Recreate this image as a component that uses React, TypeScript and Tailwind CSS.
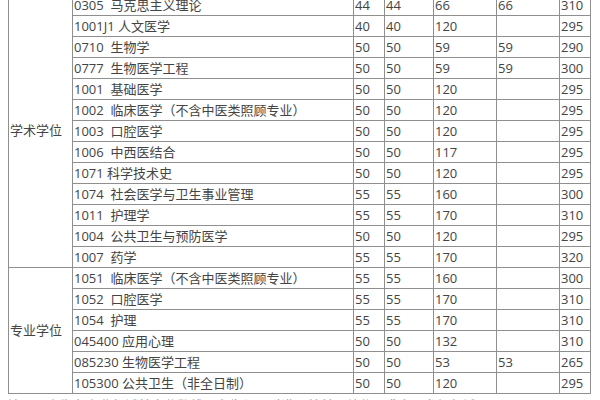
const academic: [string, string, string, string, string, string][] = [
  ["0305  马克思主义理论", "44", "44", "66", "66", "310"],
  ["1001J1 人文医学", "40", "40", "120", "", "295"],
  ["0710  生物学", "50", "50", "59", "59", "290"],
  ["0777  生物医学工程", "50", "50", "59", "59", "300"],
  ["1001  基础医学", "50", "50", "120", "", "295"],
  ["1002  临床医学（不含中医类照顾专业）", "50", "50", "120", "", "295"],
  ["1003  口腔医学", "50", "50", "120", "", "295"],
  ["1006  中西医结合", "50", "50", "117", "", "295"],
  ["1071 科学技术史", "50", "50", "120", "", "295"],
  ["1074  社会医学与卫生事业管理", "55", "55", "160", "", "300"],
  ["1011  护理学", "55", "55", "170", "", "310"],
  ["1004  公共卫生与预防医学", "50", "50", "120", "", "295"],
  ["1007  药学", "55", "55", "170", "", "320"],
];

const professional: [string, string, string, string, string, string][] = [
  ["1051  临床医学（不含中医类照顾专业）", "55", "55", "160", "", "300"],
  ["1052  口腔医学", "55", "55", "170", "", "310"],
  ["1054  护理", "55", "55", "170", "", "310"],
  ["045400 应用心理", "50", "50", "132", "", "310"],
  ["085230 生物医学工程", "50", "50", "53", "53", "265"],
  ["105300 公共卫生（非全日制）", "50", "50", "120", "", "295"],
];

const cell = "border border-[#8f8f8f] px-0 pl-[1px] h-[21px] leading-[20px] whitespace-pre";

function Group({ label, rows }: { label: string; rows: typeof academic }) {
  return (
    <>
      {rows.map((r, i) => (
        <tr key={r[0]} className="h-[21px]">
          {i === 0 && (
            <td rowSpan={rows.length} className="border border-[#8f8f8f] text-left pl-[1px] align-middle">
              {label}
            </td>
          )}
          {r.map((v, j) => (
            <td key={j} className={cell}>
              {v}
            </td>
          ))}
        </tr>
      ))}
    </>
  );
}

export default function App() {
  return (
    <div
      className="w-[600px] h-[400px] overflow-hidden bg-white text-[#444] text-[13px]"
      style={{ fontFamily: '"Open Sans", "Noto Sans CJK SC", sans-serif' }}
    >
      <div className="pl-[8px] -mt-[6px]">
        <table className="table-fixed border-collapse w-[582px]">
          <colgroup>
            <col className="w-[64px]" />
            <col className="w-[281px]" />
            <col className="w-[31px]" />
            <col className="w-[49px]" />
            <col className="w-[63px]" />
            <col className="w-[63px]" />
            <col className="w-[31px]" />
          </colgroup>
          <tbody>
            <Group label="学术学位" rows={academic} />
            <Group label="专业学位" rows={professional} />
          </tbody>
        </table>
        <p className="mt-[2px] text-[#9a9a9a] whitespace-nowrap">
          注：以上为各专业复试基本分数线，考生须同时满足单科及总分要求方可参加复试。
        </p>
      </div>
    </div>
  );
}
